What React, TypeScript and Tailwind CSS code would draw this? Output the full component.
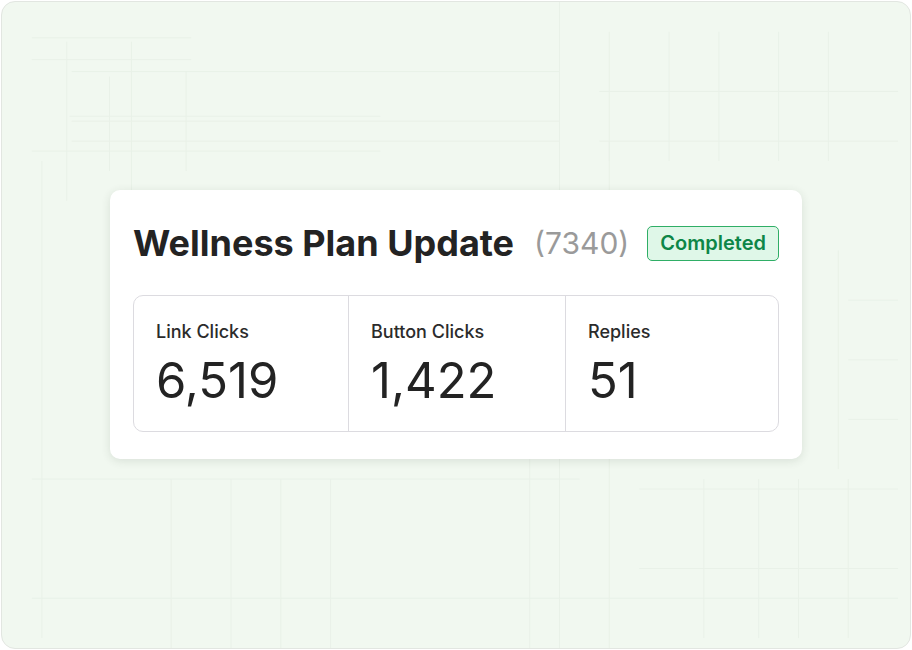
import React from 'react';

const stats = [
  { label: 'Link Clicks', value: '6,519' },
  { label: 'Button Clicks', value: '1,422' },
  { label: 'Replies', value: '51' },
];

const GridLines: React.FC = () => (
  <svg className="absolute inset-0 h-full w-full" viewBox="0 0 912 650" preserveAspectRatio="none">
    <g stroke="#e9f1e8" strokeWidth="1" fill="none">
      <path d="M30 36H190M30 58H190M65 40V200M130 40V200M70 70H560M70 120H560M70 140H560M185 70V170M560 0V650M610 140V650M68 115H380M108 75V170M30 150H380" />
      <path d="M30 480H580M30 600H900M170 480V650M230 480V650M280 480V650M330 480V650M40 160V640M640 490H900M640 570H900M705 480V640M760 480V640M800 480V640M850 480V640M530 460V650" />
      <path d="M610 30V160M670 30V160M720 30V160M780 30V160M830 30V160M600 90H900M600 140H900M840 250V470M850 300H900M850 360H900M850 420H900" />
    </g>
  </svg>
);

const App: React.FC = () => {
  return (
    <div className="w-[912px] h-[650px] p-px bg-white" style={{ fontFamily: 'Inter, "Noto Sans", sans-serif' }}>
      <div className="relative flex h-full w-full items-center justify-center overflow-hidden rounded-[14px] border border-[#e2e6e1] bg-[#f1f8f0]">
        <GridLines />
        <div className="relative -mt-[1px] w-[692px] rounded-[10px] bg-white px-[23px] pt-[31px] pb-[27px] shadow-[0_2px_10px_rgba(40,60,40,0.12)]">
          <div className="flex items-center">
            <h1 className="text-[36px] font-bold leading-[44px] text-[#232323]">Wellness Plan Update</h1>
            <span className="ml-[20px] text-[30px] leading-[44px] text-[#9a9a9a]">(7340)</span>
            <span className="ml-auto rounded-[5px] border border-[#2fae66] bg-[#dff7e8] px-[12px] py-[4px] text-[20px] font-semibold leading-[25px] text-[#0d8647]">
              Completed
            </span>
          </div>
          <div className="mt-[30px] grid grid-cols-[214px_217px_1fr] rounded-[10px] border border-[#dcdbe0]">
            {stats.map((s, i) => (
              <div key={s.label} className={`px-[22px] pt-[24px] pb-[22px] ${i > 0 ? 'border-l border-[#dcdbe0]' : ''}`}>
                <div className="text-[18px] font-medium leading-[24px] text-[#2b2b2b]">{s.label}</div>
                <div className="mt-[9px] text-[49px] leading-[56px] text-[#232323]">{s.value}</div>
              </div>
            ))}
          </div>
        </div>
      </div>
    </div>
  );
};

export default App;
